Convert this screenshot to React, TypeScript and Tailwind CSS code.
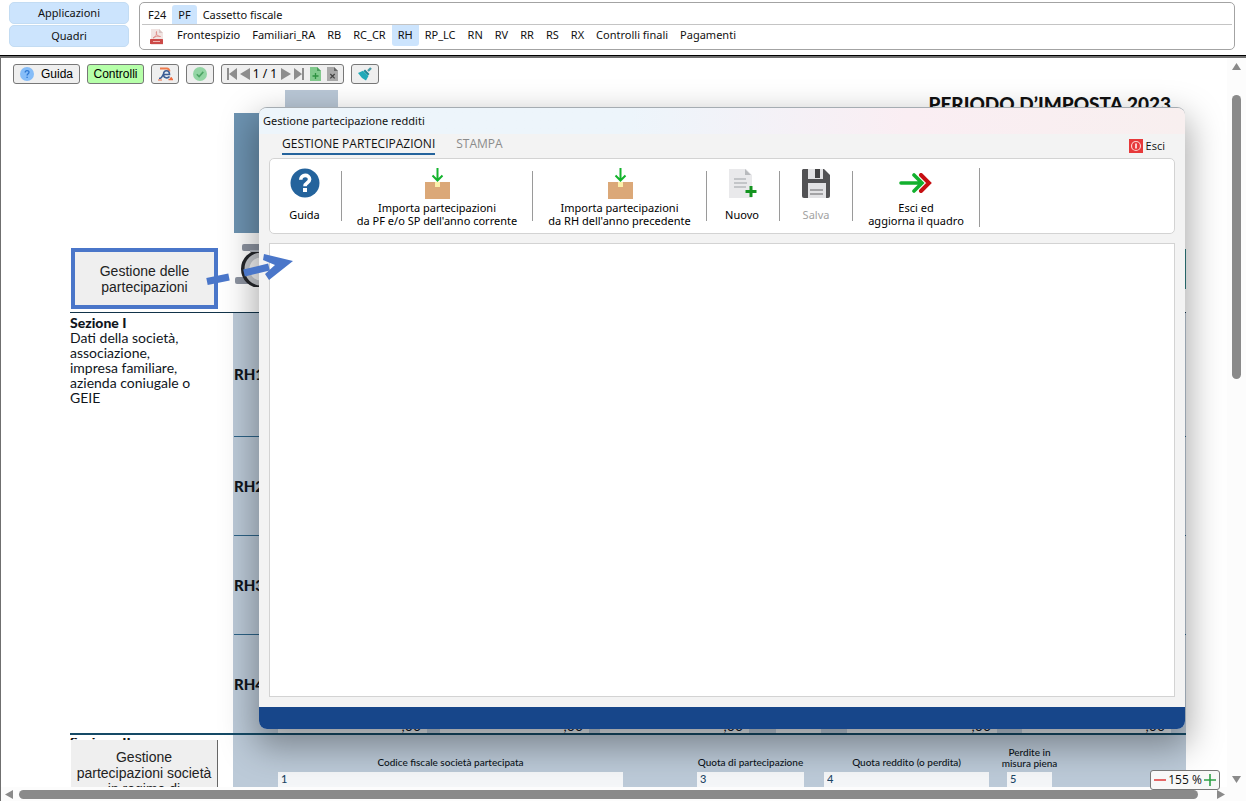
import React from "react";

const quadri = ["Frontespizio", "Familiari_RA", "RB", "RC_CR", "RH", "RP_LC", "RN", "RV", "RR", "RS", "RX", "Controlli finali", "Pagamenti"];
const applicazioni = ["F24", "PF", "Cassetto fiscale"];

function PdfIcon() {
  return (
    <svg width="13" height="16" viewBox="0 0 13 16" aria-hidden="true">
      <path d="M1 0h8l4 4v12H1z" fill="#f1e4e2" />
      <path d="M9 0l4 4H9z" fill="#d9c4c2" />
      <path d="M3 9c3-1 4-4 3.500-6.500C5.500 5 8 8 10.500 7.500 8 6.500 5 7.500 3 9z" fill="none" stroke="#e08a86" strokeWidth="0.900" />
      <rect x="0" y="10" width="13" height="5" rx="0.500" fill="#cc4a48" />
      <path d="M3 12.500h7" stroke="#eeb5b2" strokeWidth="1" />
    </svg>
  );
}

function Header() {
  return (
    <header className="flex gap-[10px] border-b border-black pt-[2px] pr-[11px] pb-[5px] pl-[9px]">
      <div className="flex w-[120px] shrink-0 flex-col gap-px">
        <button className="h-[22px] rounded-[5px] border border-[#c3dcf3] bg-[#cce4fd] text-[11px] leading-5">Applicazioni</button>
        <button className="h-[22px] rounded-[5px] border border-[#c3dcf3] bg-[#cce4fd] text-[11px] leading-5">Quadri</button>
      </div>
      <nav className="min-w-0 flex-1 rounded-[5px] border border-[#a3a3a3] px-[2px] pt-[2px] pb-[3px]">
        <div className="flex h-5 border-b border-[#c4c4c4]">
          {applicazioni.map((t) => (
            <button key={t} className={`px-[6px] text-[11px] leading-4 whitespace-nowrap ${t === "PF" ? "rounded-t-[3px] bg-[#cce4fd]" : ""}`}>{t}</button>
          ))}
        </div>
        <div className="flex h-[21px] pl-2">
          <button className="mr-2 pt-[3px]" aria-label="PDF"><PdfIcon /></button>
          {quadri.map((t) => (
            <button key={t} className={`px-[6px] pb-[2px] text-[11px] leading-4 whitespace-nowrap ${t === "RH" ? "rounded-b-[3px] bg-[#cce4fd]" : ""}`}>{t}</button>
          ))}
        </div>
      </nav>
    </header>
  );
}

const tool = "flex h-5 items-center justify-center rounded-[3px] border border-[#777] bg-[#efefef]";

function Toolbar() {
  return (
    <div className="flex gap-[7px] pt-[6px] pl-3 text-black">
      <button className={`${tool} w-[67px] gap-[7px] font-['Liberation_Sans',sans-serif] text-[12px]`}>
        <svg width="14" height="14" viewBox="0 0 14 14" aria-hidden="true">
          <circle cx="7" cy="7" r="7" fill="#86bdf8" />
          <path d="M5.200 5.500C5.200 3 9 3 9 5.300 9 6.800 7.100 6.700 7.100 8.500M7.100 9.800v1.300" fill="none" stroke="#2d77d2" strokeWidth="1.300" />
        </svg>
        Guida
      </button>
      <button className="h-5 w-[57px] rounded-[3px] border border-[#777] bg-[#b6ffa9] font-['Liberation_Sans',sans-serif] text-[12px] leading-4">Controlli</button>
      <button className={`${tool} w-7`} aria-label="Agenzia delle Entrate">
        <svg width="15" height="14" viewBox="0 0 15 14" aria-hidden="true">
          <path d="M2 1.500h7q2 0 2.500 3" fill="none" stroke="#ee7a4c" strokeWidth="2" />
          <path d="M1 11.500c3 0 3-2 4-4" fill="none" stroke="#3b5c94" strokeWidth="1.400" />
          <path d="M5.500 7.500h6c0-5-6-5-6 0 0 4 4.500 4 6 2" fill="#dfe7f2" stroke="#3b5c94" strokeWidth="1.600" />
          <path d="M0 13h4M10.500 12.700h4l-1.500-2.500" fill="#ef6a3c" stroke="#ef6a3c" strokeWidth="1.200" />
        </svg>
      </button>
      <button className={`${tool} w-7`} aria-label="Conferma">
        <svg width="14" height="14" viewBox="0 0 14 14" aria-hidden="true">
          <circle cx="7" cy="7" r="7" fill="#93d5a4" />
          <path d="M3.800 7.200l2.300 2.300 4.200-4.600" fill="none" stroke="#4ea565" strokeWidth="1.600" />
        </svg>
      </button>
      <div className={`${tool} w-[123px] gap-[3px]`}>
        <button aria-label="Primo"><svg width="10" height="12" viewBox="0 0 10 12"><path d="M0 0h2v12H0zM10 0v12L2 6z" fill="#8d8d8d" /></svg></button>
        <button aria-label="Precedente"><svg width="10" height="12" viewBox="0 0 10 12"><path d="M10 0v12L0 6z" fill="#8d8d8d" /></svg></button>
        <span className="text-[12px] leading-4">1 / 1</span>
        <button className="ml-px" aria-label="Successivo"><svg width="10" height="12" viewBox="0 0 10 12"><path d="M0 0v12l10-6z" fill="#8d8d8d" /></svg></button>
        <button aria-label="Ultimo"><svg width="10" height="12" viewBox="0 0 10 12"><path d="M8 0h2v12H8zM0 0v12l8-6z" fill="#8d8d8d" /></svg></button>
        <button className="ml-[3px]" aria-label="Aggiungi modulo">
          <svg width="11" height="14" viewBox="0 0 11 14"><path d="M0 0h7l4 4v10H0z" fill="#82ca8d" /><path d="M7 0l4 4H7z" fill="#4c9e5c" /><path d="M5.500 6v6M2.500 9h6" stroke="#2e9140" strokeWidth="1.300" /></svg>
        </button>
        <button className="ml-[3px]" aria-label="Elimina modulo">
          <svg width="11" height="14" viewBox="0 0 11 14"><path d="M0 0h7l4 4v10H0z" fill="#a9a9a9" /><path d="M7 0l4 4H7z" fill="#666" /><path d="M3.300 7l4.400 4.400M7.700 7l-4.400 4.400" stroke="#444" strokeWidth="1.300" /></svg>
        </button>
      </div>
      <button className={`${tool} w-7`} aria-label="Pulisci">
        <svg width="14" height="14" viewBox="0 0 14 14" aria-hidden="true">
          <path d="M13 1L10 4" stroke="#4a9aa5" strokeWidth="2.400" />
          <path d="M7 2.500l4.500 4.500-1.500 1.500L5.500 4z" fill="#1d8797" />
          <path d="M5 3.800L10.500 9 8 13.500 4 11 0 6z" fill="#1fa9b8" />
        </svg>
      </button>
    </div>
  );
}

function FieldStrip() {
  const cell = "flex h-8 items-end justify-end bg-[#e4e9ee] pr-[6px] text-[14px] leading-[14px]";
  return (
    <div className="flex pr-[15px]">
      <div className={`${cell} mr-[13px] w-[149px]`}>,00</div>
      <div className={`${cell} mr-[11px] w-[149px]`}>,00</div>
      <div className={`${cell} mr-[27px] w-[149px]`}>,00</div>
      <div className={`${cell} mr-[26px] w-[45px]`} />
      <div className={`${cell} mr-[25px] w-[150px]`}>,00</div>
      <div className={`${cell} flex-1`}>,00</div>
    </div>
  );
}

const field = "h-[15px] w-full bg-[#f4f6f8] pl-[3px] text-[11px] font-medium text-[#1c4564] outline-none";
const column = "flex shrink-0 flex-col items-center";
const caption = "text-center text-[10px] leading-[11px] font-medium whitespace-nowrap text-[#0c1520]";

function FormPage() {
  return (
    <div className="mr-[41px] ml-[69px] pt-[6px] font-['Lato',sans-serif]">
      <div className="flex h-[222px]">
        <div className="flex w-[163px] flex-col justify-end pb-[3px] pl-px">
          <button className="h-[61px] w-[147px] border-4 border-[#4a76c9] bg-[#efefef] px-4 font-['Liberation_Sans',sans-serif] text-[14px] leading-4 text-[#222]">Gestione delle partecipazioni</button>
        </div>
        <div className="flex-1 pl-px">
          <div className="flex h-[23px] justify-between pr-[15px] pl-[51px]">
            <div className="w-[53px] bg-[#b9c7d6]" />
            <h1 className="text-[19px] leading-7 font-black whitespace-nowrap">PERIODO D’IMPOSTA 2023</h1>
          </div>
          <div className="h-[120px] w-[400px] bg-[#6d93b1]" />
          <div className="flex justify-between pt-[10px]">
            <svg width="44" height="44" viewBox="0 0 44 44" aria-hidden="true">
              <rect x="8" y="1" width="40" height="7" rx="2" fill="#8c93a0" />
              <rect x="1" y="34" width="34" height="7" rx="2" fill="#8c93a0" />
              <circle cx="26" cy="27" r="14" fill="#f4f4f5" />
              <circle cx="26" cy="26" r="17" fill="none" stroke="#25272b" strokeWidth="4" />
              <circle cx="27" cy="26" r="14" fill="none" stroke="#c6c9ce" strokeWidth="5" />
              <path d="M16 8h14" stroke="#b5bac3" strokeWidth="2" />
            </svg>
            <div className="mt-[6px] h-10 border-r border-[#2f7d80]" />
          </div>
        </div>
      </div>
      <div className="flex border-t border-[#12344a] text-[#10151c]">
        <div className="w-[163px] pt-[2px] text-[14px] leading-[15px]">
          <h2 className="font-black">Sezione I</h2>
          <p className="w-[138px]">Dati della società, associazione,<br />impresa familiare, azienda coniugale o GEIE</p>
        </div>
        <div className="flex-1 bg-[#bccad8] pl-px text-[15px] font-black">
          <div className="flex h-[124px] items-center border-b border-[#2c6286]">RH1</div>
          <div className="flex h-[99px] items-center border-b border-[#2c6286]">RH2</div>
          <div className="flex h-[99px] items-center border-b border-[#2c6286]">RH3</div>
          <div className="flex h-[98px]">
            <span className="w-[44px] self-center">RH4</span>
            <div className="flex flex-1 flex-col justify-end font-normal"><FieldStrip /></div>
          </div>
        </div>
      </div>
      <div className="flex border-t-2 border-[#154a66]">
        <div className="w-[163px] pt-[3px]">
          <h2 className="h-[2px] overflow-hidden text-[14px] leading-[8px] font-black">Sezione II</h2>
          <button className="ml-px w-[147px] border-r border-[#666] bg-[#efefef] pt-[9px] font-['Liberation_Sans',sans-serif] text-[14px] leading-4 text-[#222]">Gestione partecipazioni società in regime di trasparenza</button>
        </div>
        <div className="flex flex-1 items-start bg-[#bccad8] pb-8 pl-[45px]">
          <label className={`${column} mr-[74px] w-[345px] pt-[22px]`}><span className={caption}>Codice fiscale società partecipata</span><input className={`${field} mt-1`} defaultValue="1" /></label>
          <label className={`${column} mr-5 w-[107px] pt-[22px]`}><span className={caption}>Quota di partecipazione</span><input className={`${field} mt-1`} defaultValue="3" /></label>
          <label className={`${column} mr-[18px] w-[165px] pt-[22px]`}><span className={caption}>Quota reddito (o perdita)</span><input className={`${field} mt-1`} defaultValue="4" /></label>
          <label className={`${column} w-[45px] pt-[12px]`}><span className={caption}>Perdite in<br />misura piena</span><input className={`${field} mt-[3px]`} defaultValue="5" /></label>
        </div>
      </div>
    </div>
  );
}

function ImportIcon() {
  return (
    <svg width="26" height="32" viewBox="0 0 26 32" aria-hidden="true">
      <rect x="1" y="14" width="25" height="17" fill="#dba878" />
      <rect x="11" y="14" width="5" height="5" fill="#fcefaa" />
      <path d="M13.500 0v12M8.500 7.500l5 5 5-5" fill="none" stroke="#13b32c" strokeWidth="2" />
    </svg>
  );
}

function Ribbon() {
  const sep = "h-[50px] w-px bg-[#9a9a9a] mt-3";
  const item = "flex flex-col items-center text-[11px] leading-[13px] whitespace-nowrap";
  return (
    <div className="flex h-[76px] rounded-[5px] border border-[#d3d3d3] bg-white text-black">
      <button className={`${item} w-[71px] pt-[9px] pr-[2px]`}>
        <svg width="30" height="30" viewBox="0 0 30 30" aria-hidden="true">
          <circle cx="15" cy="15" r="14.500" fill="#24639c" />
          <path d="M10.700 11.800C10.700 6 19.600 6 19.600 11.300 19.600 15 15 14.300 15 18.200" fill="none" stroke="#fff" strokeWidth="3.600" />
          <rect x="13" y="20" width="4" height="4" fill="#fff" />
        </svg>
        <span className="mt-[10px]">Guida</span>
      </button>
      <div className={sep} />
      <button className={`${item} w-[190px] pt-[9px]`}><ImportIcon /><span className="mt-px">Importa partecipazioni<br />da PF e/o SP dell'anno corrente</span></button>
      <div className={sep} />
      <button className={`${item} w-[173px] pt-[9px]`}><ImportIcon /><span className="mt-px">Importa partecipazioni<br />da RH dell'anno precedente</span></button>
      <div className={sep} />
      <button className={`${item} w-[72px] pt-[9px] pr-[2px]`}>
        <svg width="29" height="30" viewBox="0 0 29 30" aria-hidden="true">
          <path d="M1 1h17l6 6v23H1z" fill="#e9e9eb" />
          <path d="M17 1l6 6h-6z" fill="#b8babd" />
          <path d="M6 11h12M6 15h13M6 19h12" stroke="#b7b9bd" strokeWidth="1.400" />
          <path d="M23 18v11M17.500 23.500h11" stroke="#149420" strokeWidth="3" />
        </svg>
        <span className="mt-[10px]">Nuovo</span>
      </button>
      <div className={sep} />
      <button disabled className={`${item} w-[72px] pt-[9px] text-[#a2a2a2]`}>
        <svg width="30" height="30" viewBox="0 0 30 30" aria-hidden="true">
          <path d="M2 1h21l6 6v21q0 2-2 2H3q-2 0-2-2V2z" fill="#525254" />
          <path d="M7 1h15v10H7zM7 15h18v15H7z" fill="#e2e2e4" />
          <path d="M14 1h5v9h-5z" fill="#424244" />
          <path d="M9 22h13M9 26h13" stroke="#8e8e90" strokeWidth="1.300" />
        </svg>
        <span className="mt-[10px]">Salva</span>
      </button>
      <div className={sep} />
      <button className={`${item} w-[126px] pt-[14px]`}>
        <svg width="34" height="20" viewBox="0 0 34 20" aria-hidden="true">
          <path d="M22 2l8 8-8 8" fill="none" stroke="#c60f12" strokeWidth="4" strokeLinecap="round" />
          <path d="M2 10h20M15 2l8 8-8 8" fill="none" stroke="#12b02e" strokeWidth="3.600" strokeLinecap="round" />
        </svg>
        <span className="mt-2">Esci ed<br />aggiorna il quadro</span>
      </button>
      <div className="mt-[9px] h-[59px] w-px bg-[#9a9a9a]" />
    </div>
  );
}

function Dialog() {
  return (
    <section role="dialog" aria-label="Gestione partecipazione redditi" className="absolute top-[49px] right-[61px] bottom-[72px] left-[258px] flex flex-col overflow-hidden rounded-lg border-t border-[#a5acb2] bg-[#f3f3f3] shadow-[0_14px_34px_4px_rgba(0,0,0,0.34)]">
      <div className="h-[26px] bg-linear-to-r from-[#edf5fb] from-40% via-[#faeef3] via-70% to-[#f8efef] px-1 pt-[5px] text-[11px] leading-4">Gestione partecipazione redditi</div>
      <div className="flex items-start pr-5 pl-[23px] font-['Open_Sans',sans-serif] text-[12px] leading-4">
        <button className="h-[21px] border-b-2 border-[#24639c] pt-px whitespace-nowrap">GESTIONE PARTECIPAZIONI</button>
        <button className="ml-[21px] h-[21px] border-b-2 border-transparent pt-px text-[#8b8b8b]">STAMPA</button>
        <button className="mt-1 ml-auto flex items-center gap-[3px] text-[11px]">
          <svg width="14" height="14" viewBox="0 0 14 14" aria-hidden="true">
            <rect width="14" height="14" fill="#e7393a" />
            <circle cx="7" cy="7" r="4.500" fill="none" stroke="#fbd0cc" strokeWidth="1.200" />
            <path d="M7 4.500v5" stroke="#fff" strokeWidth="1.500" />
          </svg>
          Esci
        </button>
      </div>
      <div className="flex min-h-0 flex-1 flex-col gap-[9px] px-[10px] pt-[3px] pb-[10px]">
        <Ribbon />
        <div className="flex-1 border border-[#d3d3d3] bg-white" />
      </div>
      <div className="h-[22px] bg-[#17468a]" />
    </section>
  );
}

export default function App() {
  return (
    <div className="flex h-screen flex-col overflow-hidden bg-white font-['Noto_Sans',sans-serif] text-[#111]">
      <Header />
      <main className="relative flex min-h-0 flex-1 flex-col border-t-2 border-l border-[#6f6f6f] bg-white">
        <div className="flex min-h-0 flex-1">
          <div className="min-w-0 flex-1 overflow-hidden">
            <Toolbar />
            <FormPage />
          </div>
          <div className="flex w-[19px] flex-col items-center justify-between bg-[#fcfcfc] pt-[5px] pb-1">
            <svg width="9" height="7" viewBox="0 0 9 7" aria-hidden="true"><path d="M4.500 0L9 7H0z" fill="#8a8a8a" /></svg>
            <div className="mt-[25px] h-[284px] w-[9px] rounded-full bg-[#8a8a8a]" />
            <div className="flex-1" />
            <svg width="9" height="7" viewBox="0 0 9 7" aria-hidden="true"><path d="M4.500 7L9 0H0z" fill="#8a8a8a" /></svg>
          </div>
        </div>
        <div className="flex h-[14px] items-center gap-[6px] bg-[#fcfcfc] pr-[21px] pl-1">
          <svg width="8" height="9" viewBox="0 0 8 9" aria-hidden="true"><path d="M0 4.500L8 0v9z" fill="#8a8a8a" /></svg>
          <div className="mr-[13px] h-[9px] flex-1 rounded-full bg-[#8a8a8a]" />
          <svg width="8" height="9" viewBox="0 0 8 9" aria-hidden="true"><path d="M8 4.500L0 0v9z" fill="#8a8a8a" /></svg>
        </div>
        <Dialog />
        <svg className="absolute top-[192px] left-[205px]" width="90" height="44" viewBox="0 0 90 44" aria-hidden="true">
          <path d="M1 31.500l22-4.500M38 23l25-6" stroke="#4a76c9" strokeWidth="7" />
          <path d="M58 4l29 7-24 19-4-6 10-9-12-5z" fill="#4a76c9" />
        </svg>
        <div className="absolute right-[26px] bottom-[11px] flex h-5 w-[70px] items-center justify-between rounded-[3px] border border-[#777] bg-[#f8f8f8] px-[3px] text-[12px]">
          <button aria-label="Riduci"><svg width="12" height="12" viewBox="0 0 12 12"><path d="M0 6h12" stroke="#e04343" strokeWidth="1.600" /></svg></button>
          <span className="font-['Open_Sans',sans-serif] whitespace-nowrap">155 %</span>
          <button aria-label="Ingrandisci"><svg width="12" height="12" viewBox="0 0 12 12"><path d="M0 6h12M6 0v12" stroke="#2da045" strokeWidth="1.600" /></svg></button>
        </div>
      </main>
    </div>
  );
}
